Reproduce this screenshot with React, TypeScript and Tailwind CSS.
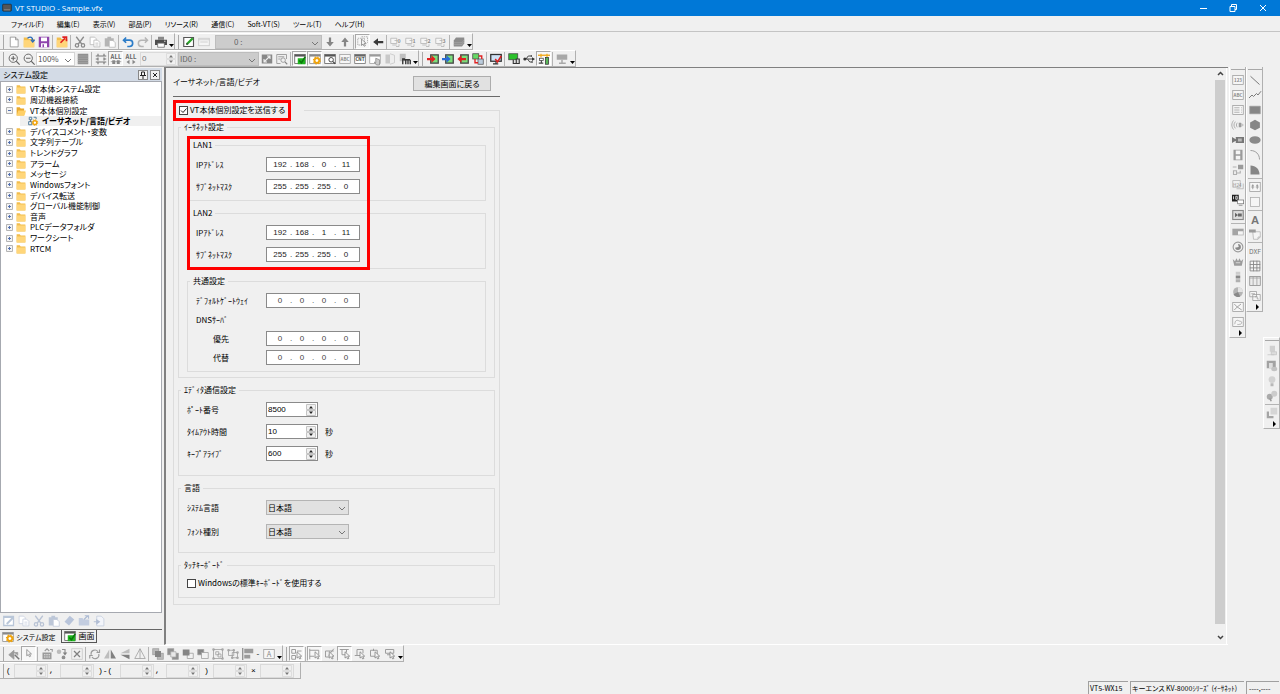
import type { ReactNode } from "react";
import clsx from "clsx";

const G = "#9b9b9b";
const D = "#4a4a4a";

const windowFrame = (c: string) => (
  <>
    <rect x="1" y="2" width="14" height="12" fill="#fff" stroke={c} />
    <path d="M1 3.5h14" stroke={c} strokeWidth="2.5" />
  </>
);

const folder = (
  <>
    <path d="M1 2h5l1.500 2H15v11H1z" fill="#f2bd4c" />
    <path d="M1 5.500h14V15H1z" fill="#ffd67a" />
  </>
);

const gear = (x: number, y: number) => (
  <g transform={`translate(${x} ${y})`}>
    <circle r="3.1" stroke="#f0a30a" strokeWidth="2.4" fill="#fff" />
    <circle r="4.6" stroke="#f0a30a" strokeWidth="1.6" strokeDasharray="1.8 1.8" />
  </g>
);

const twoSheets = (c: string) => (
  <>
    <path d="M1.5 1.5h6l2 2v8h-8z" fill="#fff" stroke={c} />
    <path d="M6.5 5.5h5l3 3v6h-8z" fill="#fff" stroke={c} />
    <path d="M8.500 9.500h4M8.500 12h4" stroke={c} />
  </>
);

const scissors = (c: string) => (
  <g stroke={c} strokeWidth="1.7">
    <path d="M3 1l7.500 10M13 1L5.500 11" />
    <circle cx="4" cy="12.500" r="2.200" />
    <circle cx="12" cy="12.500" r="2.200" />
  </g>
);

const clipboard = (c: string) => (
  <>
    <path d="M1 3h12v11H1zM4.500 1h5v3h-5z" fill={c} />
    <path d="M7 6h5l3 3v6H7z" fill="#fff" stroke={c} />
  </>
);

const cursor = (x: number, y: number) => (
  <path
    transform={`translate(${x} ${y})`}
    d="M0 0v8.500l2-1.800 1.600 3 1.600-.8-1.600-3h2.700z"
    fill="#f4f4f4"
    stroke="#808080"
  />
);

const screenLink = (arrow: ReactNode) => (
  <>
    <rect x="5" y="2.500" width="10" height="11" fill="#7be07b" stroke={D} strokeWidth="1.800" />
    {arrow}
  </>
);

const layer = (n: string) => (
  <>
    <path d="M1 3h8v7H1zM3 12h6" fill="#f5f5f5" stroke="#b0b0b0" />
    <path d="M6 6h4M12 11v3H8" stroke="#b0b0b0" />
    <text x="10" y="9" fontSize="7" fill="#8a8a8a" stroke="none" fontWeight="bold">{n}</text>
  </>
);

const pairSquares = (a: string, b: string) => (
  <>
    <rect x="1" y="1" width="8" height="8" fill={a} stroke={G} />
    <rect x="7" y="7" width="8" height="8" fill={b} stroke={G} />
  </>
);

const box = (children: ReactNode) => (
  <>
    <rect x="1" y="2" width="14" height="12" fill="#f6f6f6" stroke={G} />
    {children}
  </>
);

const label = (t: string, c = "#888", size = 6) => (
  <text x="8" y="10.500" fontSize={size} textAnchor="middle" fill={c} stroke="none" fontWeight="bold">{t}</text>
);

const icons: Record<string, ReactNode> = {
  app: <><rect x="1" y="2" width="14" height="11" rx="1" fill="#555" stroke="#222" /><path d="M3 11h10" stroke="#aaa" /></>,
  new: <path d="M3 1.500h7l3.500 3.500v9.500H3zM10 1.500V5h3.500" fill="#fff" stroke="#888" />,
  open: <>{folder}<path d="M6 3c4-3 7-1 7 3M10.500 5l2.500 3 2.500-3" stroke="#2b6cb8" strokeWidth="1.600" /></>,
  save: <><path d="M1 1h14v14H1z" fill="#8e44ad" /><path d="M4 2h8v5H4zM4 9.500h8V15H4z" fill="#fff" /><path d="M6 11h2v4H6z" fill="#8e44ad" /></>,
  import: <>{folder}<path d="M6 9l6-6M8.500 1.500H14V7" stroke="#e02020" strokeWidth="2.200" /></>,
  cut: scissors("#8b8b8b"),
  copy: twoSheets("#b4b4b4"),
  paste: clipboard("#b4b4b4"),
  undo: <path d="M5.500 2L2 5.500 5.500 9M2.500 5.500H10a4 4 0 0 1 0 8.500H7" stroke="#2b7cc8" strokeWidth="2.200" />,
  redo: <path d="M10.500 2L14 5.500 10.500 9M13.500 5.500H6a4 4 0 0 0 0 8.500h3" stroke="#b5b5b5" strokeWidth="2" />,
  print: <><path d="M4 1h8v4H4z" fill="#888" /><path d="M0 5h16v7H0z" fill="#4e4e4e" /><path d="M3.500 9.500h9V15h-9z" fill="#fff" stroke="#666" /><path d="M12 7h2" stroke="#fff" /></>,
  edit: <><path d="M1 2h13v12H1z" fill="#fff" stroke="#555" strokeWidth="1.500" /><path d="M5 11L13 3" stroke="#29a329" strokeWidth="3" /><path d="M4 12l1-3 2 2z" fill="#333" /></>,
  blank: <><rect x="1" y="3" width="14" height="10" fill="#f5f5f5" stroke="#c4c4c4" /><path d="M1 5h14M3 8h10" stroke="#c4c4c4" /></>,
  down: <path d="M6.500 2h3v6H13l-5 6-5-6h3.500z" fill="#858585" />,
  up: <path d="M6.500 14h3V8H13L8 2 3 8h3.500z" fill="#858585" />,
  left: <path d="M15 6.500v3H8V13L1.500 8 8 3v3.500z" fill="#383838" />,
  pick: <><path d="M1 3h9v9H1zM6 1h8v8" stroke={G} strokeDasharray="2 1" />{cursor(6, 4)}</>,
  layer0: layer("0"),
  layer1: layer("1"),
  layer2: layer("2"),
  layer3: layer("3"),
  stack: <><path d="M4 2h11v8l-3 4H1V6z" fill="#8c8c8c" /><path d="M1 9h11l3-4M1 11.500h11l3-4" stroke="#a8a8a8" /></>,
  zoomIn: <><circle cx="7" cy="7" r="5.500" stroke="#666" strokeWidth="1.300" /><path d="M11 11l4.500 4.500M4 7h6M7 4v6" stroke="#666" strokeWidth="1.500" /></>,
  zoomOut: <><circle cx="7" cy="7" r="5.500" stroke="#666" strokeWidth="1.300" /><path d="M11 11l4.500 4.500M4 7h6" stroke="#666" strokeWidth="1.500" /></>,
  grid: <><path d="M1 1h14v14H1z" fill="#909090" /><path d="M1 4h14M1 7h14M1 10h14M1 13h14" stroke="#a8a8a8" /></>,
  spacing: <path d="M1 4h14M1 12h14M4 1v3M12 1v3M4 12v3M12 12v3M4 6v4M12 6v4M1 8h3M12 8h3" stroke="#777" strokeWidth="1.500" />,
  allV: <><text x="8" y="7.500" fontSize="8" textAnchor="middle" fill="#666" stroke="none" fontWeight="bold">ALL</text><path d="M1 11.500h14" stroke="#999" /><path d="M3 9.500h4v5H3zM9 9.500h4v5H9z" fill="#888" /></>,
  allH: <><text x="8" y="7.500" fontSize="8" textAnchor="middle" fill="#666" stroke="none" fontWeight="bold">ALL</text><path d="M6 9v6l-4-3zM10 9v6l4-3z" fill="#888" /></>,
  swap: <><rect x="1" y="2" width="14" height="12" fill="#888" /><path d="M4 12l8-8M8 4h4v4M4 8v4h4" stroke="#eee" strokeWidth="1.500" /></>,
  findDoc: <><path d="M1 2h13v6M1 2v12h5M3 5h8M3 8h3" stroke="#888" /><circle cx="9.500" cy="9.500" r="3" stroke="#888" /><path d="M12 12l3 3" stroke="#888" strokeWidth="1.500" /></>,
  winCheck: <>{windowFrame("#555")}<path d="M5 7h10v8H5z" fill="#1fb51f" /><path d="M7 10l3 3 5-8" stroke="#0b7a0b" strokeWidth="2" /></>,
  winGear: <>{windowFrame("#888")}{gear(10.500, 10)}</>,
  winFind: <>{windowFrame("#555")}<circle cx="9.500" cy="9" r="3" fill="#fff" stroke="#444" strokeWidth="1.300" /><path d="M12 11.500l3 3" stroke="#444" strokeWidth="1.800" /></>,
  abc: box(label("ABC")),
  cnt: <>{windowFrame("#666")}{label("CNT", "#333")}</>,
  winHand: <>{windowFrame(G)}<path d="M9 7v6l-2-1 3 4h4V9z" fill="#ccc" stroke="#888" /></>,
  door: <><path d="M2 2h6v12H2z" fill="#c9c9c9" /><path d="M8 1l6 2v10l-6 2" fill="#eee" stroke="#c4c4c4" /></>,
  module: <><path d="M1 1h8v10H1z" fill="#c0c0c0" /><path d="M5 15V8h2v1h7l1 1v5M9 9v6M12 9v6" stroke="#333" strokeWidth="1.800" /></>,
  sendRed: screenLink(<path d="M0 6.500h6V3l5.500 5L6 13V9.500H0z" fill="#e02020" />),
  sendBlue: screenLink(<path d="M0 6.500h6V3l5.500 5L6 13V9.500H0z" fill="#2b6cd8" />),
  recvRed: screenLink(<path d="M12 6.500H6V3L0.500 8 6 13V9.500h6z" fill="#e02020" />),
  compare: <><rect x="1" y="1" width="8" height="7" fill="#65d865" stroke="#444" /><rect x="8" y="8" width="7" height="7" fill="#bcd" stroke="#555" /><path d="M4 8v5h4M9 4h4v4" stroke="#e02020" strokeWidth="1.800" /></>,
  monitorCheck: <><rect x="1" y="2" width="14" height="9" fill="#cfe2f5" stroke="#333" strokeWidth="1.700" /><path d="M8 11v3M4 14.500h7" stroke="#333" strokeWidth="1.600" /><path d="M7 8l3 4 5-8" stroke="#e02020" strokeWidth="2" /></>,
  monitorGreen: <><rect x="1" y="1" width="12" height="8" fill="#2cc22c" stroke="#444" /><path d="M7 9v5h5M11 8h4v6h-4z" stroke="#333" strokeWidth="1.500" fill="#ddd" /></>,
  usb: <><path d="M1 8h12M4 8l3-4h3M6 8l3 4h2" stroke="#444" strokeWidth="1.300" /><circle cx="2.500" cy="8" r="2" fill="#333" /><path d="M12 5.500L16 8l-4 2.500zM10 3h2v2h-2zM11 11h2v2h-2z" fill="#333" /></>,
  network: <><path d="M0 3h16" stroke="#f0a818" strokeWidth="1.800" /><path d="M4 1v5M12 1v5" stroke="#f0a818" strokeWidth="1.600" /><rect x="2" y="7" width="5" height="3" fill="#fff" stroke="#444" /><path d="M1 13.500h6M4.500 10v3" stroke="#444" strokeWidth="1.500" /><rect x="10" y="6" width="4" height="9" fill="#58b858" stroke="#333" /></>,
  monitorGray: <><rect x="1" y="2" width="14" height="7" fill="#a8a8a8" /><path d="M8 9v4M4 13.500h9" stroke="#a8a8a8" strokeWidth="2" /></>,
  folder,
  folderOpen: <><path d="M1 2h5l1.500 2H13v11H1z" fill="#e8a92e" /><path d="M3.500 7H16l-2.500 8H1z" fill="#ffd067" /></>,
  netGear: <><path d="M2 2h4v4H2zM1 9h5v5H1zM9 2h4v3" stroke="#4c7a9a" strokeWidth="1.500" /><path d="M4 6v3" stroke="#444" />{gear(11, 10.500)}</>,
  pEdit: <><path d="M1 2h13v12H1z" fill="#fff" stroke="#b9c6d8" strokeWidth="1.700" /><path d="M1 3h13" stroke="#b9c6d8" strokeWidth="2" /><path d="M5 12l9-9" stroke="#b9c6d8" strokeWidth="2.500" /></>,
  pCopy: twoSheets("#c5cedd"),
  pCut: scissors("#b9c3d4"),
  pPaste: clipboard("#bdc7d8"),
  pErase: <path d="M9 1l6 5-7 8-6-5z" fill="#b8c4da" />,
  pFolder: <><path d="M1 4h5l1.500 2H15v8H1z" fill="#c3cde0" /><path d="M8 6l5-5M9 1h5v4" stroke="#aebcd4" strokeWidth="1.600" /></>,
  pExit: <><path d="M5 1.500h6l3.500 3.500v9.500H5z" fill="#f3f5fa" stroke="#c2cbdc" /><path d="M1 9h6M5 6.500L8.500 9 5 11.500z" fill="#b2bed4" stroke="#b2bed4" strokeWidth="1.500" /></>,
  rotPen: <><path d="M1 9l7-6v12zM8 6h5v4" fill={G} stroke={G} /><path d="M9 9l6 6" stroke="#777" strokeWidth="2" /></>,
  arrow: cursor(5, 2),
  calcu: <><path d="M2 6h12v9H2z" fill={G} /><path d="M5 4l3-3 3 3M12 2h3v3" stroke={G} strokeWidth="1.500" /><path d="M4 9h2M7 9h2M10 9h2M4 12h2M7 12h2M10 12h2" stroke="#fff" /></>,
  snapDots: <><circle cx="4" cy="5" r="3" fill="#bbb" /><path d="M8 2h4v5" stroke="#909090" strokeWidth="1.600" /><path d="M9 6h6l-3 4z" fill="#808080" /><circle cx="10" cy="12.500" r="2.500" fill="#909090" /></>,
  cross: <><rect x="1" y="1" width="14" height="14" stroke="#c4c4c4" /><path d="M4 4l8 8M12 4l-8 8" stroke="#808080" strokeWidth="1.700" /></>,
  rotate: <path d="M3 9a5 5 0 0 1 9-4M14 2v4h-4M13 8a5 5 0 0 1-9 4M1 14v-4h4" stroke={G} strokeWidth="1.600" />,
  flipH: <><path d="M7 2v12H0z" fill="#bdbdbd" /><path d="M9 2v12h7z" fill="#808080" /></>,
  flipV: <><path d="M14 1v6H2z" fill="#bdbdbd" /><path d="M14 15V9H2z" fill="#808080" /></>,
  triangle: <path d="M8 1l7 13H1zM8 1v13" stroke={G} />,
  front: <>{pairSquares("#bbb", "#bbb")}<path d="M4 4h8v8H4z" fill="#858585" /></>,
  back: <>{pairSquares("#909090", "#909090")}<path d="M5 5h7v7H5z" fill="#e8e8e8" stroke="#aaa" /></>,
  forward: <><path d="M7 7h8v7H7z" fill="#f2f2f2" stroke={G} /><path d="M1 2h9v8H1z" fill="#858585" /></>,
  backward: <><path d="M1 2h8v7H1z" fill="#858585" stroke={G} /><path d="M6 6h9v8H6z" fill="#f2f2f2" stroke={G} /></>,
  group: <path d="M2 2h12v12H2zM5 5h4v4H5zM8 8h4v4H8zM1 1h2v2H1zM13 1h2v2h-2zM1 13h2v2H1zM13 13h2v2h-2z" stroke={G} />,
  ungroup: <path d="M2 3h7v7H2zM7 6h7v7H7zM1 2h2v2H1zM8 2h2v2H8zM13 5h2v2h-2zM6 12h2v2H6zM13 12h2v2h-2z" stroke={G} />,
  align: <><path d="M1 0v16" stroke="#808080" strokeWidth="1.500" /><path d="M3 1h12v6H3zM3 9h8v5H3z" fill={G} /></>,
  fontBox: box(<text x="8" y="12" fontSize="10" textAnchor="middle" fill="#888" stroke="none">A</text>),
  node: <><path d="M1 2h5v5H1zM1 10h5v5H1zM8 4h6" stroke="#808080" />{cursor(8, 5)}</>,
  selTop: <><path d="M1 1v14M1 3h12v6M1 11h6" stroke={G} strokeWidth="1.300" />{cursor(8, 5)}</>,
  selDiag: <><path d="M2 4h11M2 4v8h5M13 1L6 10" stroke={G} strokeWidth="1.300" />{cursor(7, 5)}</>,
  selHang: <><path d="M1 2h12M4 2v7h4M10 2v4" stroke={G} strokeWidth="1.300" />{cursor(8, 5)}</>,
  selStep: <><path d="M4 10V2h8v5M1 10h7" stroke={G} strokeWidth="1.300" />{cursor(8, 5)}</>,
  selBox: <><path d="M2 3h9v8H2zM6 1v3" stroke={G} strokeWidth="1.300" />{cursor(8, 5)}</>,
  selFlag: <><path d="M2 2h11v5H2zM4 9h5" stroke={G} strokeWidth="1.300" />{cursor(8, 5)}</>,
  num: box(label("123")),
  text: box(label("ABC")),
  list: box(<path d="M3 5h7M3 8h7M3 11h7M12 5h1M12 8h1M12 11h1" stroke={G} />),
  sound: <><path d="M9 5h3v6H9z" fill={G} /><path d="M12 5l4 3-4 3z" fill="#c4c4c4" /><path d="M7 5c-1.500 2-1.500 4 0 6M4.500 3.500c-2.500 3-2.500 6 0 9M2 2c-3 4-3 8 0 12" stroke={G} /></>,
  camera: <><path d="M5 4h11v8H5zM0 4l5 3v2l-5 3z" fill="#777" /><path d="M8 6h5v4H8z" fill="#bbb" /></>,
  film: <><path d="M2 1h12v14H2z" fill={G} /><path d="M5 2h6v5H5zM5 9h6v5H5z" fill="#f5f5f5" /></>,
  route: <><rect x="8" y="1" width="7" height="6" fill={G} /><path d="M1 4h5M2 9h4v5H2zM6 12h5V9" stroke="#b0b0b0" strokeWidth="1.500" /></>,
  keyFrame: <><path d="M1 2h10v9H1zM6 13h9V6" stroke="#b0b0b0" /><text x="7" y="10" fontSize="6" textAnchor="middle" fill="#888" stroke="none">H24</text></>,
  pcView: <><path d="M0 1h9v9H0z" fill="#222" /><path d="M2 3v4M5 3v4h2V3z" stroke="#fff" /><rect x="7.500" y="8" width="8" height="5" fill="#fff" stroke="#777" /><path d="M9 15h5" stroke="#777" /></>,
  play: <><rect x="1" y="2" width="14" height="12" fill="#ddd" stroke="#888" strokeWidth="1.500" /><path d="M4 5v6l4-3zM8 6h5v4H8z" fill="#666" /></>,
  bar: <><rect x="1" y="4" width="14" height="8" fill="#f5f5f5" stroke="#b0b0b0" /><path d="M1 4h14v3H1zM1 7h7v5H1z" fill="#a4a4a4" /></>,
  meter: <><circle cx="8" cy="8" r="6.500" stroke={G} strokeWidth="1.500" /><path d="M8 4a4 4 0 1 1-4 5l5-1z" fill="#888" /></>,
  crown: <><path d="M1 4l3 3 2-4 2 4 2-4 2 4 3-3-2 9H3z" fill={G} /><path d="M5 9h6" stroke="#eee" /></>,
  tower: <><path d="M5 1h6v4H5z" fill="#ccc" /><path d="M5 6h6v4H5z" fill="#888" /><path d="M5 11h6v4H5z" fill="#b0b0b0" /></>,
  pie: <><circle cx="8" cy="8" r="6.500" fill="#b4b4b4" /><path d="M8 8V1.500A6.500 6.500 0 0 1 14.500 8z" fill="#e4e4e4" /><path d="M8 8l-6 3a6.500 6.500 0 0 0 9 3z" fill="#888" /></>,
  scatter: box(<path d="M3 4l4 4 5-4M3 12l4-4 6 4" stroke="#888" />),
  trend: box(<path d="M3 11c2-1 0-4 3-5 2-1 3 1 5 1 3 0 2 4 0 4s-3 1-4 0" stroke={G} />),
  line: <path d="M2 3l12 11" stroke="#777" strokeWidth="1.300" />,
  zigzag: <path d="M0 12l4-4 2 2 4-4 2 2 4-5" stroke="#777" strokeWidth="1.300" />,
  rect: <path d="M1 3h14v10H1z" fill="#868686" stroke={G} />,
  hexagon: <path d="M8 1l6.500 3.500v7L8 15l-6.500-3.500v-7z" fill="#868686" />,
  ellipse: <ellipse cx="8" cy="8" rx="7.500" ry="5" fill="#8a8a8a" />,
  arc: <path d="M2 2c7 0 12 5 12 12" stroke={G} strokeWidth="1.300" />,
  sector: <path d="M2 2c7 0 12 5 12 12H2z" fill="#868686" />,
  ruler: box(<path d="M5 5v6M11 5v6M3 8h4M9 8h4M4 6.500L5 5l1 1.500M10 6.500L11 5l1 1.500" stroke="#888" />),
  frame: <rect x="2" y="2" width="12" height="12" fill="#f5f5f5" stroke="#aaa" />,
  letterA: <text x="8" y="14" fontSize="15" textAnchor="middle" fill="#777" stroke="none" fontWeight="bold" className="font-['Liberation_Sans']">A</text>,
  pages: <><path d="M5 5h10v7l-3 3H6z" fill="#f5f5f5" stroke="#b0b0b0" /><path d="M12 15v-3h3" stroke="#b0b0b0" /><path d="M0 2h9v4H0z" fill={G} /></>,
  dxf: <text x="8" y="12" fontSize="9" textAnchor="middle" fill="#777" stroke="none">DXF</text>,
  table: <path d="M1.500 1.500h13v13h-13zM1 6h14M1 10.500h14M6 1v14M10.500 1v14" stroke="#888" strokeWidth="1.200" fill="#f5f5f5" />,
  columns: <><rect x="1" y="2" width="14" height="12" fill="#ececec" stroke="#888" /><path d="M5.500 2v12M10.500 2v12M1 4h14" stroke={G} /></>,
  windows: <><path d="M1 2h9v7H1zM5 6h10v8H5z" fill="#f5f5f5" stroke="#999" /><path d="M3 5h5M8 9h3v3h2" stroke="#999" /></>,
  fRoll: <><path d="M5 1h7v8H5z" fill="#d0d0d0" /><path d="M7 9h7v4H7zM2 13h9" stroke="#c4c4c4" fill="#ddd" /></>,
  fBlock: <><path d="M1 1h12v10H1z" fill="#a2a2a2" /><path d="M4 4h5v7H4z" fill="#ddd" /><ellipse cx="11" cy="12" rx="4" ry="3" fill="#c2c2c2" /></>,
  bulb: <><circle cx="8" cy="6" r="4.500" fill="#d2d2d2" /><path d="M6 11h4v4H6z" fill="#b8b8b8" /></>,
  fDots: <><circle cx="5" cy="9" r="4" fill="#aaa" /><circle cx="11" cy="5" r="4" fill="#ccc" /><path d="M5 11l2 4" stroke="#999" strokeWidth="2" /></>,
  fStack: <><path d="M6 1h9v9H6z" fill="#d5d5d5" /><path d="M1 6v9h9v-3H4V6z" fill="#a5a5a5" /></>,
};

function Icon({ name, size = "size-3" }: { name: string; size?: string }) {
  return (
    <svg viewBox="0 0 16 16" fill="none" className={clsx("shrink-0 overflow-visible", size)} aria-hidden="true">
      {icons[name]}
    </svg>
  );
}

function ToolButton({ name, active }: { name: string; active?: boolean }) {
  return (
    <button
      type="button"
      aria-label={name}
      className={clsx(
        "flex size-[15px] shrink-0 items-center justify-center",
        active && "border border-r-white border-b-white border-[#a8a8a8] bg-[#f7f7f7]",
      )}
    >
      <Icon name={name} />
    </button>
  );
}

// "|" is a separator, a leading "*" marks a pressed button
function Tools({ items, vertical }: { items: string; vertical?: boolean }) {
  return (
    <>
      {items.split(" ").map((item, i) => {
        if (item === "|") {
          return (
            <span
              key={i}
              className={clsx(
                "shrink-0 border-[#b4b4b4]",
                vertical ? "mt-px h-px w-3.5 border-t" : "ml-px h-3.5 w-0.5 border-l",
              )}
            />
          );
        }
        return <ToolButton key={i} name={item.replace("*", "")} active={item.startsWith("*")} />;
      })}
    </>
  );
}

function Bar({ children, more }: { children: ReactNode; more?: boolean }) {
  return (
    <div className="flex h-[17px] shrink-0 items-center border-r border-b border-[#b0b0b0] border-t border-t-white pl-[3px]">
      <span className="mr-0.5 h-3.5 w-px shrink-0 bg-[#a8a8a8]" />
      {children}
      {more && (
        <svg viewBox="0 0 6 12" className="h-3 w-[6px]" aria-hidden="true">
          <path d="M1 8h5l-2.500 3z" fill="#000" />
        </svg>
      )}
    </div>
  );
}

function VerticalBar({ items, className }: { items: string; className?: string }) {
  return (
    <div className={clsx("flex w-[17px] shrink-0 flex-col items-center self-start border-r border-b border-[#b0b0b0] border-l border-l-white pt-0.5", className)}>
      <span className="mb-0.5 h-px w-3.5 bg-[#a8a8a8]" />
      <Tools items={items} vertical />
      <svg viewBox="0 0 12 8" className="h-2 w-3" aria-hidden="true">
        <path d="M7 1v6l3-3z" fill="#000" />
      </svg>
    </div>
  );
}

function SpinArrows({ muted }: { muted?: boolean }) {
  return (
    <svg viewBox="0 0 10 12" className="h-3 w-2.5 shrink-0" aria-hidden="true">
      <path d="M0.500 0.500h9v5h-9zM0.500 6.500h9v5h-9z" fill="#f0f0f0" stroke={muted ? "#ddd" : "#c4c4c4"} />
      <path d="M3 4.500h4L5 2zM3 7.500h4L5 10z" fill={muted ? "#777" : "#222"} />
    </svg>
  );
}

function Spin({ label: name, value, className, muted }: { label: string; value?: string; className: string; muted?: boolean }) {
  return (
    <span
      className={clsx(
        "flex shrink-0 items-center border pr-px",
        muted ? "border-[#dadada] bg-[#efefef] text-[#777]" : "border-[#8a8a8a] bg-white",
        className,
      )}
    >
      <input aria-label={name} defaultValue={value} className="w-0 min-w-0 flex-1 pl-px font-['Liberation_Sans'] outline-none" />
      <SpinArrows muted={muted} />
    </span>
  );
}

function Combo({ id, label: name, options, className, align }: { id?: string; label?: string; options: string[]; className: string; align?: string }) {
  return (
    <span className={clsx("relative flex shrink-0 border", className)}>
      <select id={id} aria-label={name} className={clsx("w-full appearance-none pr-3 outline-none", align ?? "pl-px")}>
        {options.map((o) => (
          <option key={o}>{o}</option>
        ))}
      </select>
      <svg viewBox="0 0 8 8" className="pointer-events-none absolute top-1 right-0.5 size-2" fill="none" aria-hidden="true">
        <path d="M1 2l3 3 3-3" stroke="#777" />
      </svg>
    </span>
  );
}

function Group({ title, className, children }: { title: ReactNode; className?: string; children: ReactNode }) {
  return (
    <fieldset className="border border-[#dcdcdc]">
      <legend className="ml-0.5 flex h-3 items-center px-[3px]">{title}</legend>
      <div className={clsx("flex flex-col", className)}>{children}</div>
    </fieldset>
  );
}

function IpField({ label: name, value, indent, muted }: { label: string; value: string; indent?: boolean; muted?: boolean }) {
  return (
    <div role="group" aria-label={name} className="flex h-[15px] items-center">
      <span className={clsx("w-[70px] shrink-0", indent && "pl-[17px]")}>{name}</span>
      <span className={clsx("flex h-[15px] w-[94px] items-center border border-[#8a8a8a] bg-white pl-1 font-['Liberation_Sans']", muted ? "text-[#444]" : "text-[#222]")}>
        {value.split(".").map((octet, i) => (
          <span key={i} className="flex">
            {i > 0 && <span className="w-1 text-center">.</span>}
            <input aria-label={`${name} ${i + 1}`} defaultValue={octet} className="w-[18px] text-center outline-none" />
          </span>
        ))}
      </span>
    </div>
  );
}

function SpinField({ label: name, value, unit }: { label: string; value: string; unit?: string }) {
  return (
    <div className="flex h-[15px] items-center">
      <span className="w-[79px] shrink-0">{name}</span>
      <Spin label={name} value={value} className="h-[15px] w-[52px]" />
      {unit && <span className="ml-[7px]">{unit}</span>}
    </div>
  );
}

function SelectField({ id, label: name }: { id: string; label: string }) {
  return (
    <div className="flex h-[15px] items-center">
      <label htmlFor={id} className="w-[79px] shrink-0">{name}</label>
      <Combo id={id} options={["日本語"]} className="h-[15px] w-[83px] border-[#b4b4b4] bg-[#e1e1e1]" />
    </div>
  );
}

function Check({ children, checked }: { children: ReactNode; checked?: boolean }) {
  return (
    <label className="flex items-center gap-0.5">
      <span className="relative flex size-[9px] shrink-0">
        <input type="checkbox" defaultChecked={checked} className="peer size-[9px] appearance-none border border-[#444] bg-white" />
        <svg viewBox="0 0 9 9" fill="none" className="pointer-events-none absolute inset-0 hidden size-[9px] peer-checked:block" aria-hidden="true">
          <path d="M2 4.500l2 2 3.500-4" stroke="#222" />
        </svg>
      </span>
      {children}
    </label>
  );
}

const menus = ["ファイル(F)", "編集(E)", "表示(V)", "部品(P)", "リソース(R)", "通信(C)", "Soft-VT(S)", "ツール(T)", "ヘルプ(H)"];

const tree = [
  { text: "VT本体システム設定" },
  { text: "周辺機器接続" },
  { text: "VT本体個別設定", open: true },
  { text: "イーサネット/言語/ビデオ", selected: true },
  { text: "デバイスコメント・変数" },
  { text: "文字列テーブル" },
  { text: "トレンドグラフ" },
  { text: "アラーム" },
  { text: "メッセージ" },
  { text: "Windowsフォント" },
  { text: "デバイス転送" },
  { text: "グローバル機能制御" },
  { text: "音声" },
  { text: "PLCデータフォルダ" },
  { text: "ワークシート" },
  { text: "RTCM" },
];

function TitleBar() {
  return (
    <header className="flex h-4 shrink-0 items-center bg-[#0078d7] pl-0.5 text-white">
      <Icon name="app" size="size-2.5" />
      <h1 className="ml-[3px] flex-1 font-['Open_Sans'] text-[8px]">VT STUDIO - Sample.vfx</h1>
      <div className="flex gap-[18px] pr-[11px]">
        <button type="button" aria-label="最小化">
          <svg viewBox="0 0 12 12" className="size-3" fill="none" stroke="#fff"><path d="M3 6.500h7" /></svg>
        </button>
        <button type="button" aria-label="元に戻す">
          <svg viewBox="0 0 12 12" className="size-3" fill="none" stroke="#fff"><path d="M3 4.500h5v5H3zM4.500 4.500v-2h5v5H8" /></svg>
        </button>
        <button type="button" aria-label="閉じる">
          <svg viewBox="0 0 12 12" className="size-3" fill="none" stroke="#fff"><path d="M3 3l6 6M9 3L3 9" /></svg>
        </button>
      </div>
    </header>
  );
}

function SettingsTree() {
  return (
    <aside className="flex w-[162px] shrink-0 flex-col pt-px">
      <div className="flex h-[13px] items-center justify-between bg-[#d3dbe6] pr-0.5 pl-[3px]">
        <h2>システム設定</h2>
        <div className="flex gap-0.5">
          <button type="button" aria-label="固定" className="size-2.5 border border-[#888] bg-[#f0f0f0]">
            <svg viewBox="0 0 8 8" fill="none" stroke="#222"><path d="M2.500 1h3v3.500h-3zM1 4.500h6M4 4.500V8" /></svg>
          </button>
          <button type="button" aria-label="閉じる" className="size-2.5 border border-[#888] bg-[#f0f0f0]">
            <svg viewBox="0 0 8 8" fill="none" stroke="#222"><path d="M2 2l4 4M6 2L2 6" /></svg>
          </button>
        </div>
      </div>
      <div className="flex-1 border border-[#a6a9b0] bg-white pt-0.5">
        <ul className="grid h-[170px] auto-rows-fr leading-[10px]">
          {tree.map((node) => (
            <li key={node.text} className="flex items-center pl-[5px]">
              {node.selected ? (
                <span className="ml-[14px] flex flex-1 items-center gap-1 bg-[#f0f0f0] pl-2 font-bold">
                  <Icon name="netGear" size="size-2.5" />
                  {node.text}
                </span>
              ) : (
                <>
                  <svg viewBox="0 0 7 7" className="size-[7px] shrink-0" fill="#f4f4f4" aria-hidden="true">
                    <path d="M.5.500h6v6h-6z" stroke="#b4b4b4" />
                    <path d={node.open ? "M2 3.500h3" : "M2 3.500h3M3.500 2v3"} stroke="#5572b0" />
                  </svg>
                  <span className="mr-1 ml-[3px] flex">
                    <Icon name={node.open ? "folderOpen" : "folder"} size="size-2.5" />
                  </span>
                  {node.text}
                </>
              )}
            </li>
          ))}
        </ul>
      </div>
      <div className="flex h-[17px] items-center border-b border-[#666] pl-px">
        <Tools items="pEdit pCopy pCut pPaste pErase pFolder pExit" />
      </div>
      <div className="flex h-[13px] pl-0.5">
        <button type="button" className="flex items-center gap-0.5 pr-1.5 text-[7px]">
          <Icon name="winGear" />
          システム設定
        </button>
        <button type="button" className="flex items-center gap-0.5 border border-t-0 border-[#555] px-0.5">
          <Icon name="winCheck" />
          画面
        </button>
      </div>
      <div className="h-0.5" />
    </aside>
  );
}

function SettingsForm() {
  return (
    <form className="w-[327px]">
      <div className="flex h-[29px] items-center justify-between border-b border-[#6a6a6a] pr-[9px]">
        <h2>イーサネット/言語/ビデオ</h2>
        <button type="button" className="mb-[5px] h-[15px] w-[78px] self-end border border-[#adadad] bg-[#e1e1e1]">
          編集画面に戻る
        </button>
      </div>
      <div className="mt-[7px]">
        <Group
          className="gap-1.5 px-1 pt-[5px] pb-1.5"
          title={
            <span className="relative flex w-[122px]">
              <Check checked>VT本体個別設定を送信する</Check>
              <span className="pointer-events-none absolute -top-1 -left-1.5 h-[21px] w-[118px] border-3 border-[#ff0000]" />
            </span>
          }
        >
          <Group title="ｲｰｻﾈｯﾄ設定" className="gap-1.5 px-2 pt-1.5 pb-[5px]">
            <div className="relative flex flex-col gap-1.5">
              <Group title="LAN1" className="gap-[7px] px-2 pt-1.5 pb-1.5">
                <IpField label="IPｱﾄﾞﾚｽ" value="192.168.0.11" />
                <IpField label="ｻﾌﾞﾈｯﾄﾏｽｸ" value="255.255.255.0" />
              </Group>
              <Group title="LAN2" className="gap-[7px] px-2 pt-1.5 pb-1.5">
                <IpField label="IPｱﾄﾞﾚｽ" value="192.168.1.11" />
                <IpField label="ｻﾌﾞﾈｯﾄﾏｽｸ" value="255.255.255.0" />
              </Group>
              <span className="pointer-events-none absolute -top-[3px] -bottom-px left-0 w-[183px] border-3 border-[#ff0000]" />
            </div>
            <Group title="共通設定" className="gap-1 px-2 pt-1.5 pb-1.5">
              <IpField label="ﾃﾞﾌｫﾙﾄｹﾞｰﾄｳｪｲ" value="0.0.0.0" muted />
              <p className="flex h-[15px] items-center">DNSｻｰﾊﾞ</p>
              <IpField label="優先" value="0.0.0.0" indent muted />
              <IpField label="代替" value="0.0.0.0" indent muted />
            </Group>
          </Group>
          <Group title="ｴﾃﾞｨﾀ通信設定" className="gap-[7px] px-2 pt-1.5 pb-3.5">
            <SpinField label="ﾎﾟｰﾄ番号" value="8500" />
            <SpinField label="ﾀｲﾑｱｳﾄ時間" value="10" unit="秒" />
            <SpinField label="ｷｰﾌﾟｱﾗｲﾌﾞ" value="600" unit="秒" />
          </Group>
          <Group title="言語" className="gap-[9px] px-2 pt-1.5 pb-[13px]">
            <SelectField id="system-language" label="ｼｽﾃﾑ言語" />
            <SelectField id="font-type" label="ﾌｫﾝﾄ種別" />
          </Group>
          <Group title="ﾀｯﾁｷｰﾎﾞｰﾄﾞ" className="px-2 pt-1.5 pb-2">
            <Check>Windowsの標準ｷｰﾎﾞｰﾄﾞを使用する</Check>
          </Group>
        </Group>
      </div>
    </form>
  );
}

function ScrollBar() {
  return (
    <div className="mr-px flex w-3 shrink-0 flex-col items-start border-r border-white">
      <svg viewBox="0 0 11 12" className="h-3 w-[11px]" fill="none" stroke="#444" strokeWidth="1.500"><path d="M3 7l2.500-2.500L8 7" /></svg>
      <div className="w-2.5 flex-1 bg-[#cdcdcd]" />
      <svg viewBox="0 0 11 20" className="h-5 w-[11px]" fill="none" stroke="#444" strokeWidth="1.500"><path d="M3 12l2.500 2.500L8 12" /></svg>
    </div>
  );
}

export default function App() {
  return (
    <div className="flex h-screen flex-col overflow-hidden bg-[#f0f0f0] font-['Noto_Sans_CJK_JP',sans-serif] text-[8px] leading-3 text-black [font-feature-settings:'palt']">
      <TitleBar />
      <nav className="flex h-4 shrink-0 items-center gap-[13px] border-b border-[#c4c4c4] pl-[11px] text-[7px]">
        {menus.map((m) => (
          <button key={m} type="button">{m}</button>
        ))}
      </nav>

      <div className="flex shrink-0 pt-px">
        <Bar more>
          <Tools items="new open save | import | cut copy paste | undo redo | print" />
        </Bar>
        <Bar more>
          <Tools items="edit blank" />
          <Combo label="画面番号" options={["0 :"]} className="ml-1 h-3.5 w-[107px] border-[#bdbdbd] bg-[#cccccc] text-[#666]" align="pl-[18px]" />
          <Tools items="down up | *pick left | layer0 layer1 layer2 layer3 | stack" />
        </Bar>
      </div>
      <div className="flex shrink-0">
        <Bar more>
          <Tools items="zoomIn zoomOut" />
          <Combo label="倍率" options={["100%"]} className="h-3.5 w-[39px] border-[#d4d4d4] bg-white text-[#555]" />
          <Tools items="grid | spacing *allV allH" />
          <Spin label="番号" value="0" muted className="ml-0.5 h-3.5 w-[38px]" />
          <Combo label="ID" options={["ID0 :"]} className="h-3.5 w-[81px] border-[#bdbdbd] bg-[#cccccc] text-[#666]" />
          <Tools items="swap findDoc | *winCheck *winGear winFind abc cnt winHand door module" />
        </Bar>
        <Bar more>
          <Tools items="sendRed sendBlue recvRed compare | monitorCheck | monitorGreen usb *network | monitorGray" />
        </Bar>
      </div>

      <div className="flex min-h-0 flex-1">
        <SettingsTree />
        <main className="ml-0.5 flex min-w-0 flex-1 overflow-hidden border-t border-l-2 border-[#808080] border-b border-b-white">
          <div className="min-w-0 flex-1 pl-[7px]">
            <SettingsForm />
          </div>
          <ScrollBar />
        </main>
        <div className="flex shrink-0 pl-px">
          <VerticalBar items="num text list sound camera film route keyFrame pcView play | bar meter crown tower pie scatter trend" />
          <VerticalBar items="line zigzag rect hexagon ellipse arc sector | ruler frame | letterA pages | dxf table columns windows" />
          <VerticalBar items="fRoll fBlock bulb fDots | fStack" className="mt-[270px] border-t border-t-white" />
        </div>
      </div>

      <div className="flex shrink-0">
        <Bar more>
          <Tools items="rotPen *arrow | calcu snapDots cross | rotate flipH flipV triangle | front back forward backward group ungroup align" />
          <span className="w-1.5 text-center">-</span>
          <Tools items="fontBox" />
        </Bar>
        <Bar more>
          <Tools items="*node | *selTop selDiag *selHang selStep selBox selFlag" />
        </Bar>
      </div>
      <div className="flex shrink-0 font-['Liberation_Mono']">
        <Bar>
          <span className="w-2">(</span>
          <Spin label="X1" muted className="h-3.5 w-[34px]" />
          <span className="w-3 pl-px">,</span>
          <Spin label="Y1" muted className="h-3.5 w-[34px]" />
          <span className="w-[26px] pl-1">)-(</span>
          <Spin label="X2" muted className="h-3.5 w-[34px]" />
          <span className="w-3 pl-px">,</span>
          <Spin label="Y2" muted className="h-3.5 w-[34px]" />
          <span className="w-[13px] text-center">)</span>
          <Spin label="幅" muted className="h-3.5 w-[34px]" />
          <span className="w-[13px] text-center">×</span>
          <Spin label="高さ" muted className="mr-1.5 h-3.5 w-[34px]" />
        </Bar>
      </div>

      <footer className="flex h-[15px] shrink-0 items-end justify-end gap-0.5 pr-px text-[7px]">
        <span className="h-[13px] w-10 border-t border-l border-[#a0a0a0] pl-px">VT5-WX15</span>
        <span className="h-[13px] w-[114px] border-t border-l border-[#a0a0a0] pl-px whitespace-nowrap">キーエンス KV-8000ｼﾘｰｽﾞ (ｲｰｻﾈｯﾄ)</span>
        <span className="h-[13px] w-[33px] border-t border-l border-[#a0a0a0] pl-0.5">----,----</span>
      </footer>
    </div>
  );
}
